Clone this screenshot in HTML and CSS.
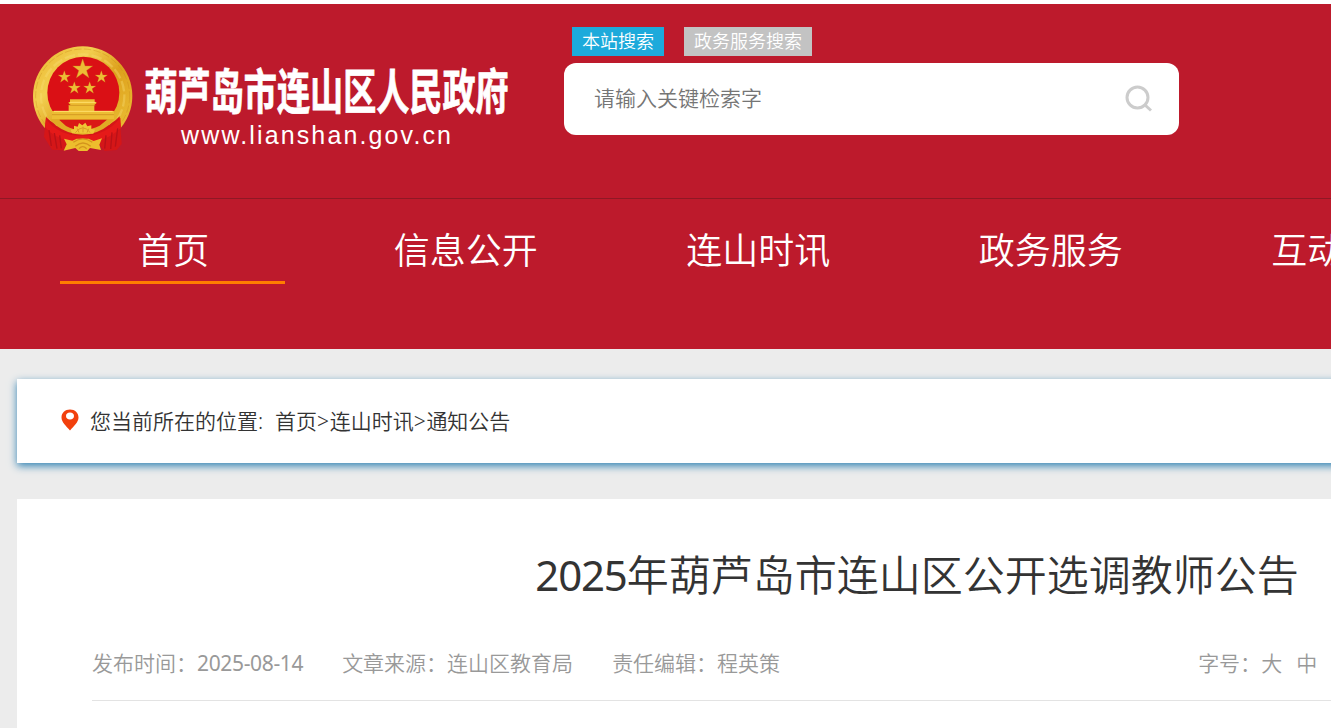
FILE: index.html
```html
<!DOCTYPE html>
<html lang="zh-CN">

<head>
  <meta charset="UTF-8" />
  <meta name="viewport" content="width=device-width, initial-scale=1" />
  <title>2025年葫芦岛市连山区公开选调教师公告</title>
  <link rel="stylesheet" href="styles.css">
</head>

<body>
  <header class="header">
    <div class="header-top">
      <a class="logo" href="#" aria-label="葫芦岛市连山区人民政府">
        <svg width="490" height="116" viewBox="0 0 490 116">
          <defs>
            <linearGradient id="gold" x1="0" y1="0" x2="1" y2="1">
              <stop offset="0" stop-color="#e9b52c" />
              <stop offset="0.3" stop-color="#f3cf50" />
              <stop offset="0.55" stop-color="#dda01c" />
              <stop offset="1" stop-color="#efc83d" />
            </linearGradient>
            <path id="star" d="M0-28 6.5-9H27L10.500 3 17 23 0 11-17 23-10.500 3-27-9H-6.500Z" />
          </defs>
          <g transform="scale(0.33333)">
            <circle cx="176" cy="168" r="149" fill="url(#gold)" />
            <circle cx="176" cy="168" r="141" fill="none" stroke="#c98616" stroke-width="3" stroke-dasharray="22 7" opacity="0.35" />
            <circle cx="176" cy="168" r="125" fill="none" stroke="#f8df77" stroke-width="7" stroke-dasharray="32 9" opacity="0.35" />
            <circle cx="178" cy="158" r="108" fill="#da1015" />
            <!-- ribbon -->
            <path d="M66 231Q94 260 134 268L176 275 222 266Q264 256 287 229L293 312 278 330 242 333 224 312H128L118 331 84 329 60 290Z" fill="#d51618" />
            <path d="M66 236Q103 288 176 287 246 287 289 233L291 263Q247 307 176 307 104 307 63 261Z" fill="#e51a19" />
            <path d="M75 270 82 318M91 279 99 326M107 286 112 325M281 265 274 320M264 277 260 327M246 286 242 326" stroke="#b81118" stroke-width="4" fill="none" />
            <path d="M78 238H270L258 253Q220 284 176 284T95 256Z" fill="#e0ab25" />
            <path d="M106 240H248L227 257Q203 269 176 270T126 258Z" fill="#da1816" />
            <!-- gate -->
            <path d="M84 213H134V195H140L134 190V186H138V178H212V186H217V190L211 195V213H270V237H84Z" fill="#edbd34" />
            <path d="M84 224H270M134 196H214" stroke="#c98a19" stroke-width="2" />
            <path d="M138 187H214M90 214H266" stroke="#ffe06b" stroke-width="3" />
            <!-- gear -->
            <path d="M144 280 140 269 150 268 150 257 161 260 165 249 175 256 184 248 190 259 202 256 202 267 213 269 208 281Z" fill="#efc636" />
            <path d="M154 278Q176 249 199 278M165 278 160 266M177 277V260M189 278 194 266" fill="none" stroke="#d99d25" stroke-width="3" />
            <path d="M120 296 145 302 158 296H194L209 303 234 295 226 314 231 330 198 324 190 333H164L154 324 119 332 128 313Z" fill="#edbd2d" />
            <path d="M148 307Q176 286 205 307M154 319Q177 299 200 319M165 326Q176 314 188 326" fill="none" stroke="#d3941d" stroke-width="4" />
            <g fill="#edbd35" stroke="#d08b20" stroke-width="1">
              <use href="#star" transform="translate(176 88) scale(1.100)" />
              <use href="#star" transform="translate(121 111) scale(0.68)" />
              <use href="#star" transform="translate(232 111) scale(0.68)" />
              <use href="#star" transform="translate(151 144) scale(0.68)" />
              <use href="#star" transform="translate(197 144) scale(0.68)" />
            </g>
          </g>
          <text class="logo-name" transform="translate(120.500 68.500) scale(0.69 1)">葫芦岛市连山区人民政府</text>
          <text class="logo-url" x="157" y="104" textLength="270">www.lianshan.gov.cn</text>
        </svg>
      </a>

      <form class="search">
        <div class="search-tabs">
          <span class="search-tab active">本站搜索</span>
          <span class="search-tab">政务服务搜索</span>
        </div>
        <div class="search-box">
          <input type="text" class="search-input" placeholder="请输入关键检索字" />
          <svg class="search-icon" width="28" height="28" viewBox="0 0 28 28">
            <circle cx="12.500" cy="12.500" r="10.500" />
            <path d="M20 20l6 5.500" />
          </svg>
        </div>
      </form>
    </div>

    <nav class="nav">
      <a class="nav-item active" href="#">首页</a>
      <a class="nav-item" href="#">信息公开</a>
      <a class="nav-item" href="#">连山时讯</a>
      <a class="nav-item" href="#">政务服务</a>
      <a class="nav-item" href="#">互动交流</a>
    </nav>
  </header>

  <main class="main">
    <div class="position">
      <svg class="pin" width="18" height="22" viewBox="0 0 18 22">
        <path fill-rule="evenodd" d="M9 .5C4 .5.500 4 .500 8.500.500 13 5 17 9 21.500c4-4.500 8.500-8.500 8.500-13C17.500 4 14 .5 9 .5ZM9 3.500c2.500 0 4 1.500 4 3.500s-1.500 3.500-4 3.500S5 9 5 7s1.500-3.500 4-3.500Z" />
      </svg>
      <span class="position-label">您当前所在的位置:</span>
      <span><a href="#">首页</a><span class="sep">&gt;</span><a href="#">连山时讯</a><span class="sep">&gt;</span><a href="#">通知公告</a></span>
    </div>

    <article class="article">
      <h1><span class="year">2025</span>年葫芦岛市连山区公开选调教师公告</h1>
      <div class="meta">
        <span class="meta-item">发布时间：<span class="date">2025-08-14</span></span>
        <span class="meta-item">文章来源：连山区教育局</span>
        <span class="meta-item">责任编辑：程英策</span>
        <div class="font-size">
          <span>字号：</span><a href="#">大</a><a href="#">中</a>
        </div>
      </div>
    </article>
  </main>
</body>

</html>
```
FILE: styles.css
```css
:root {
  --color-red: #bd1a2c;
  --color-bg: #ececec;
  --font-family: "Noto Sans", "Noto Sans CJK SC", sans-serif;
}

* {
  box-sizing: border-box;
}

html {
  overflow: hidden;
  background: #fff;
}

body {
  margin: 0;
  padding-top: 4px;
  height: 728px;
  overflow: hidden;
  font-family: var(--font-family);
  font-weight: 350;
}

a {
  color: inherit;
  text-decoration: none;
}

/* Header */
.header {
  width: 1834px;
  height: 345px;
  background: var(--color-red);
}

.header-top {
  display: flex;
  height: 195px;
  padding-left: 24px;
  border-bottom: 1px solid #8f1825;
}

.logo {
  width: 540px;
  padding-top: 36px;
}

.logo svg {
  display: block;
}

.logo-name {
  font-family: "Noto Sans CJK SC", sans-serif;
  font-size: 48px;
  font-weight: 700;
  fill: #fff;
  stroke: #fff;
  stroke-width: 0.8px;
}

.logo-url {
  font-family: "Liberation Sans", Arial, sans-serif;
  font-size: 25px;
  font-weight: 400;
  fill: #fff;
}

.search {
  width: 615px;
  padding-top: 23px;
}

.search-tabs {
  display: flex;
  gap: 20px;
  padding-left: 8px;
  margin-bottom: 7px;
}

.search-tab {
  height: 29px;
  padding: 0 10px;
  font-size: 18px;
  line-height: 29px;
  color: #fff;
  background: #c3c3c3;
}

.search-tab.active {
  background: #1daadb;
}

.search-box {
  display: flex;
  align-items: center;
  height: 72px;
  padding: 0 26px 0 30px;
  background: #fff;
  border-radius: 12px;
}

.search-input {
  flex: 1;
  padding: 0 0 2px;
  border: 0;
  outline: 0;
  font: 350 21px var(--font-family);
}

.search-input::placeholder {
  color: #757575;
}

.search-icon {
  fill: none;
  stroke: #ccc;
  stroke-width: 3;
}

/* Navigation */
.nav {
  display: flex;
  padding: 22px 0 0 26px;
}

.nav-item {
  display: flex;
  flex-direction: column;
  align-items: center;
  width: 292.5px;
  flex-shrink: 0;
  font-size: 36px;
  line-height: 60px;
  text-indent: 2px;
  color: #fff;
}

.nav-item::after {
  content: "";
  width: 225px;
  height: 3px;
}

.nav-item.active::after {
  background: #ff7e00;
}

/* Content */
.main {
  width: 1834px;
  height: 379px;
  padding: 30px 17px 0;
  background: var(--color-bg);
}

.position {
  display: flex;
  align-items: center;
  height: 84px;
  padding: 0 0 3px 44px;
  font-size: 21px;
  color: #333;
  background: #fff;
  box-shadow: 0 3px 8px #3585b5;
}

.pin {
  margin-right: 11px;
  fill: #f2400d;
}

.position-label {
  width: 185px;
}

.sep {
  margin-right: 0.7px;
}

.article {
  height: 260px;
  margin-top: 36px;
  padding: 46px 75px 0;
  background: #fff;
}

.article h1 {
  margin: 0;
  font-size: 42px;
  font-weight: 350;
  line-height: 60px;
  text-align: center;
  color: #333;
}

.year {
  font-weight: 400;
  letter-spacing: -1.2px;
}

.meta {
  display: flex;
  gap: 39px;
  height: 96px;
  padding-top: 42px;
  font-size: 21px;
  line-height: 32px;
  color: #999;
  border-bottom: 1px solid #e3e3e3;
}

.date {
  font-weight: 400;
  letter-spacing: -0.35px;
}

.font-size {
  display: flex;
  gap: 14px;
  margin-left: 379px;
}

.font-size span {
  margin-right: -14px;
}
```
